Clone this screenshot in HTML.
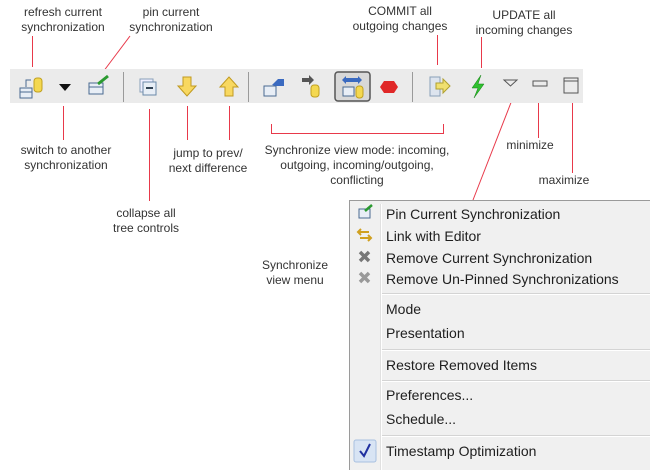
<!DOCTYPE html><html><head><style>
body{margin:0;width:650px;height:469px;background:#fff;position:relative;overflow:hidden;font-family:"Liberation Sans",Arial,sans-serif}
.t{position:absolute;font-size:12px;color:#333;text-align:center;line-height:15px;white-space:nowrap;transform:translateX(-50%)}
.l{position:absolute;background:#e8394a}
#tb{position:absolute;left:10px;top:69px;width:573px;height:34px;background:#ebebeb}
.sep{position:absolute;top:72px;width:1px;height:30px;background:#9a9a9a}
#menu{position:absolute;left:349px;top:200px;width:301px;height:269px;background:#f0f0f0;border-left:1px solid #9a9a9a;border-top:1px solid #9a9a9a}
#gut{position:absolute;left:30px;top:3px;width:1px;height:266px;background:#e0e0e0;border-right:1px solid #fff}
.mi{position:absolute;left:36px;font-size:14px;color:#1e1e1e}
.ms{position:absolute;left:32px;right:0;height:1px;background:#d4d4d4;border-bottom:1px solid #fff}
</style></head><body>
<div class="t" style="left:63px;top:5px">refresh current<br>synchronization</div>
<div class="t" style="left:171px;top:5px">pin current<br>synchronization</div>
<div class="t" style="left:400px;top:4px">COMMIT all<br>outgoing changes</div>
<div class="t" style="left:524px;top:8px">UPDATE all<br>incoming changes</div>
<div class="t" style="left:66px;top:143px">switch to another<br>synchronization</div>
<div class="t" style="left:208px;top:146px">jump to prev/<br>next difference</div>
<div class="t" style="left:146px;top:206px">collapse all<br>tree controls</div>
<div class="t" style="left:357px;top:143px">Synchronize view mode: incoming,<br>outgoing, incoming/outgoing,<br>conflicting</div>
<div class="t" style="left:530px;top:138px">minimize</div>
<div class="t" style="left:564px;top:173px">maximize</div>
<div class="t" style="left:295px;top:258px">Synchronize<br>view menu</div>
<div class="l" style="left:32px;top:36px;width:1px;height:31px"></div>
<div class="l" style="left:63px;top:106px;width:1px;height:34px"></div>
<div class="l" style="left:149px;top:109px;width:1px;height:92px"></div>
<div class="l" style="left:187px;top:106px;width:1px;height:34px"></div>
<div class="l" style="left:229px;top:106px;width:1px;height:34px"></div>
<div class="l" style="left:271px;top:124px;width:1px;height:9px"></div>
<div class="l" style="left:443px;top:124px;width:1px;height:9px"></div>
<div class="l" style="left:271px;top:133px;width:173px;height:1px"></div>
<div class="l" style="left:437px;top:35px;width:1px;height:30px"></div>
<div class="l" style="left:481px;top:37px;width:1px;height:31px"></div>
<div class="l" style="left:538px;top:101px;width:1px;height:37px"></div>
<div class="l" style="left:572px;top:101px;width:1px;height:72px"></div>
<svg style="position:absolute;left:0;top:0" width="650" height="469"><line x1="130" y1="36" x2="103" y2="72" stroke="#e8394a"/><line x1="512" y1="100" x2="473" y2="200" stroke="#e8394a"/></svg>
<div id="tb"></div>
<div class="sep" style="left:123px"></div><div class="sep" style="left:248px"></div><div class="sep" style="left:412px"></div>
<svg style="position:absolute;left:0;top:69px" width="600" height="34">
<rect x="20" y="19" width="12" height="10" fill="#e8eef6" stroke="#4a6a90"/><line x1="20" y1="23" x2="32" y2="23" stroke="#4a6a90"/>
<path d="M26 18 V11 H31" stroke="#4a6a90" fill="none"/>
<rect x="34" y="9" width="8" height="14" rx="3" fill="#f4d850" stroke="#c0a020"/>
<path d="M59 15 H71 L65 22 Z" fill="#111"/>
<rect x="89" y="14" width="14" height="11" fill="#e8eef6" stroke="#4a6a90"/><line x1="89" y1="18" x2="103" y2="18" stroke="#4a6a90"/>
<path d="M98 15 L108 7" stroke="#2a9a30" stroke-width="3"/>
<rect x="140" y="10" width="13" height="13" fill="#eef" stroke="#8aa0b8"/><rect x="143" y="13" width="13" height="13" fill="#e8eef6" stroke="#6a88a8"/><line x1="146" y1="19" x2="153" y2="19" stroke="#345" stroke-width="2"/>
<path d="M183 8 H191 V17 H196 L187 27 L178 17 H183 Z" fill="#f8d860" stroke="#c09a20"/>
<path d="M225 27 H233 V18 H238 L229 8 L220 18 H225 Z" fill="#f8d860" stroke="#c09a20"/>
<rect x="264" y="17" width="12" height="10" fill="#e8eef6" stroke="#4a6a90"/><path d="M272 16 L278 10 H284 V17 H276 Z" fill="#3a6ac0"/>
<path d="M302 9 H309 V6 L314 11 L309 16 V13 H302 Z" fill="#555"/><rect x="311" y="16" width="8" height="12" rx="3" fill="#f4d850" stroke="#c0a020"/>
<rect x="335" y="3" width="35" height="29" rx="3" fill="#d8d8d8" stroke="#555" stroke-width="1.5"/>
<path d="M342 11 L346 7 V9 H358 V7 L362 11 L358 15 V13 H346 V15 Z" fill="#3a6ac0"/><rect x="343" y="18" width="11" height="9" fill="#e8eef6" stroke="#4a6a90"/><rect x="356" y="17" width="7" height="12" rx="3" fill="#f4d850" stroke="#c0a020"/>
<path d="M380 18 L384 12 H394 L398 18 L394 24 H384 Z" fill="#e02828"/>
<rect x="430" y="8" width="10" height="19" fill="#dde4ee" stroke="#8aa0b8"/><path d="M436 14 H443 V10 L450 17 L443 24 V20 H436 Z" fill="#f0e070" stroke="#b0a030"/>
<path d="M481 6 L472 19 H478 L474 29 L484 15 H478 Z" fill="#30c030" stroke="#108010" stroke-width=".5"/>
<path d="M504 11 H517 L510.5 17 Z" fill="none" stroke="#555"/>
<rect x="533" y="12" width="14" height="5" fill="none" stroke="#555"/>
<rect x="564" y="9" width="14" height="15" fill="none" stroke="#555"/><line x1="564" y1="12" x2="578" y2="12" stroke="#555"/>
</svg>
<div id="menu">
<div id="gut"></div>
<svg style="position:absolute;left:0;top:0" width="30" height="269">
<rect x="9" y="8" width="11" height="9" fill="#e8eef6" stroke="#4a6a90"/><path d="M15 10 L22 4" stroke="#2a9a30" stroke-width="2.5"/>
<path d="M9 31 H19 M11 28 L8 31 L11 34 M10 37 H20 M18 34 L21 37 L18 40" stroke="#d0a020" stroke-width="2" fill="none"/>
<path d="M10 51 L19 60 M19 51 L10 60" stroke="#777" stroke-width="3.5"/>
<path d="M10 72 L19 81 M19 72 L10 81" stroke="#999" stroke-width="3.5"/>
<rect x="4" y="239" width="22" height="22" rx="2" fill="#d8e4f4" stroke="#a8c0e0"/>
<path d="M10 250 L14 255 L20 243" stroke="#2030a0" stroke-width="2" fill="none"/>
</svg>
<div class="mi" style="top:5px">Pin Current Synchronization</div>
<div class="mi" style="top:27px">Link with Editor</div>
<div class="mi" style="top:49px">Remove Current Synchronization</div>
<div class="mi" style="top:70px">Remove Un-Pinned Synchronizations</div>
<div class="ms" style="top:92px"></div>
<div class="mi" style="top:100px">Mode</div>
<div class="mi" style="top:124px">Presentation</div>
<div class="ms" style="top:148px"></div>
<div class="mi" style="top:156px">Restore Removed Items</div>
<div class="ms" style="top:179px"></div>
<div class="mi" style="top:186px">Preferences...</div>
<div class="mi" style="top:210px">Schedule...</div>
<div class="ms" style="top:234px"></div>
<div class="mi" style="top:242px">Timestamp Optimization</div>
</div>
</body></html>
